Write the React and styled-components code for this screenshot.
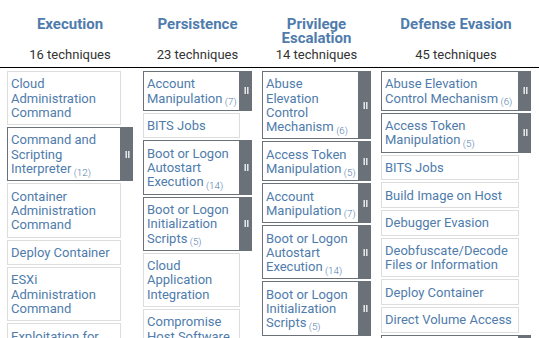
import React from "react"
import styled, { createGlobalStyle } from "styled-components"

const GlobalStyle = createGlobalStyle`
  html, body {
    margin: 0;
    padding: 0;
    background: #fff;
    overflow: hidden;
  }
  body {
    font-family: Roboto, "Liberation Sans", sans-serif;
  }
`

const BLUE = "#4f7cac"
const DARK = "#6a7178"

const columns = [
  {
    name: "Execution",
    count: 16,
    width: 114,
    techniques: [
      ["Cloud Administration Command"],
      ["Command and Scripting Interpreter", 12],
      ["Container Administration Command"],
      ["Deploy Container"],
      ["ESXi Administration Command"],
      ["Exploitation for Client Execution"],
      ["Input Injection"],
      ["Inter-Process Communication", 3],
    ],
  },
  {
    name: "Persistence",
    count: 23,
    width: 97,
    techniques: [
      ["Account Manipulation", 7],
      ["BITS Jobs"],
      ["Boot or Logon Autostart Execution", 14],
      ["Boot or Logon Initialization Scripts", 5],
      ["Cloud Application Integration"],
      ["Compromise Host Software Binary"],
      ["Create Account", 3],
    ],
  },
  {
    name: "Privilege Escalation",
    count: 14,
    width: 97,
    techniques: [
      ["Abuse Elevation Control Mechanism", 6],
      ["Access Token Manipulation", 5],
      ["Account Manipulation", 7],
      ["Boot or Logon Autostart Execution", 14],
      ["Boot or Logon Initialization Scripts", 5],
      ["Create or Modify System Process", 5],
    ],
  },
  {
    name: "Defense Evasion",
    count: 45,
    width: 138,
    techniques: [
      ["Abuse Elevation Control Mechanism", 6],
      ["Access Token Manipulation", 5],
      ["BITS Jobs"],
      ["Build Image on Host"],
      ["Debugger Evasion"],
      ["Deobfuscate/Decode Files or Information"],
      ["Deploy Container"],
      ["Direct Volume Access"],
      ["Domain or Tenant Policy Modification", 2],
    ],
  },
]

const SIDEBAR = 12

const Page = styled.div`
  width: max-content;
  min-width: 100vw;
`

const HeaderRow = styled.div`
  display: flex;
  gap: 10px;
  padding: 0 7px;
  border-bottom: 1px solid #000;
`

const HeaderCell = styled.div`
  width: ${p => p.$width}px;
  display: flex;
  flex-direction: column;
  align-items: center;
  text-align: center;
  padding: 17px 0 5px;
`

const Title = styled.div`
  height: 30px;
  font-size: 15px;
  font-weight: 700;
  line-height: 14px;
  color: ${BLUE};
`

const Count = styled.div`
  font-size: 13px;
  line-height: 15px;
  color: #333;
`

const Body = styled.div`
  display: flex;
  align-items: flex-start;
  gap: 10px;
  padding: 3px 7px 0;
`

const Column = styled.div`
  width: ${p => p.$width}px;
  display: flex;
  flex-direction: column;
  gap: 2px;
`

const Row = styled.div`
  display: flex;
  align-items: stretch;
`

const Cell = styled.div`
  width: ${p => p.$width}px;
  box-sizing: border-box;
  border: 1px solid ${p => (p.$dark ? DARK : "#ddd")};
  padding: 5.3px 1px 4px 3px;
  font-size: 13px;
  line-height: 14.3px;
  color: ${BLUE};
  background: #fff;
`

const Sub = styled.sub`
  position: relative;
  bottom: -0.25em;
  vertical-align: baseline;
  font-size: 75%;
  line-height: 0;
  font-weight: 300;
  white-space: nowrap;
`

const Sidebar = styled.div`
  width: ${SIDEBAR}px;
  background: ${DARK};
  display: flex;
  align-items: center;
  justify-content: center;
`

const Grip = () => (
  <svg width="5" height="7" viewBox="0 0 5 7">
    <rect x="0.5" y="0" width="1.4" height="7" fill="#f2f2f2" />
    <rect x="3.1" y="0" width="1.4" height="7" fill="#f2f2f2" />
  </svg>
)

export default function App() {
  return (
    <Page>
      <GlobalStyle />
      <HeaderRow>
        {columns.map(col => (
          <HeaderCell key={col.name} $width={col.width + SIDEBAR}>
            <Title>{col.name}</Title>
            <Count>{col.count} techniques</Count>
          </HeaderCell>
        ))}
      </HeaderRow>
      <Body>
        {columns.map(col => (
          <Column key={col.name} $width={col.width + SIDEBAR}>
            {col.techniques.map(([label, subs], i) => (
              <Row key={i}>
                <Cell $width={col.width} $dark={!!subs}>
                  {label}
                  {subs && <Sub>{"\u00a0"}({subs})</Sub>}
                </Cell>
                {subs && (
                  <Sidebar>
                    <Grip />
                  </Sidebar>
                )}
              </Row>
            ))}
          </Column>
        ))}
      </Body>
    </Page>
  )
}
